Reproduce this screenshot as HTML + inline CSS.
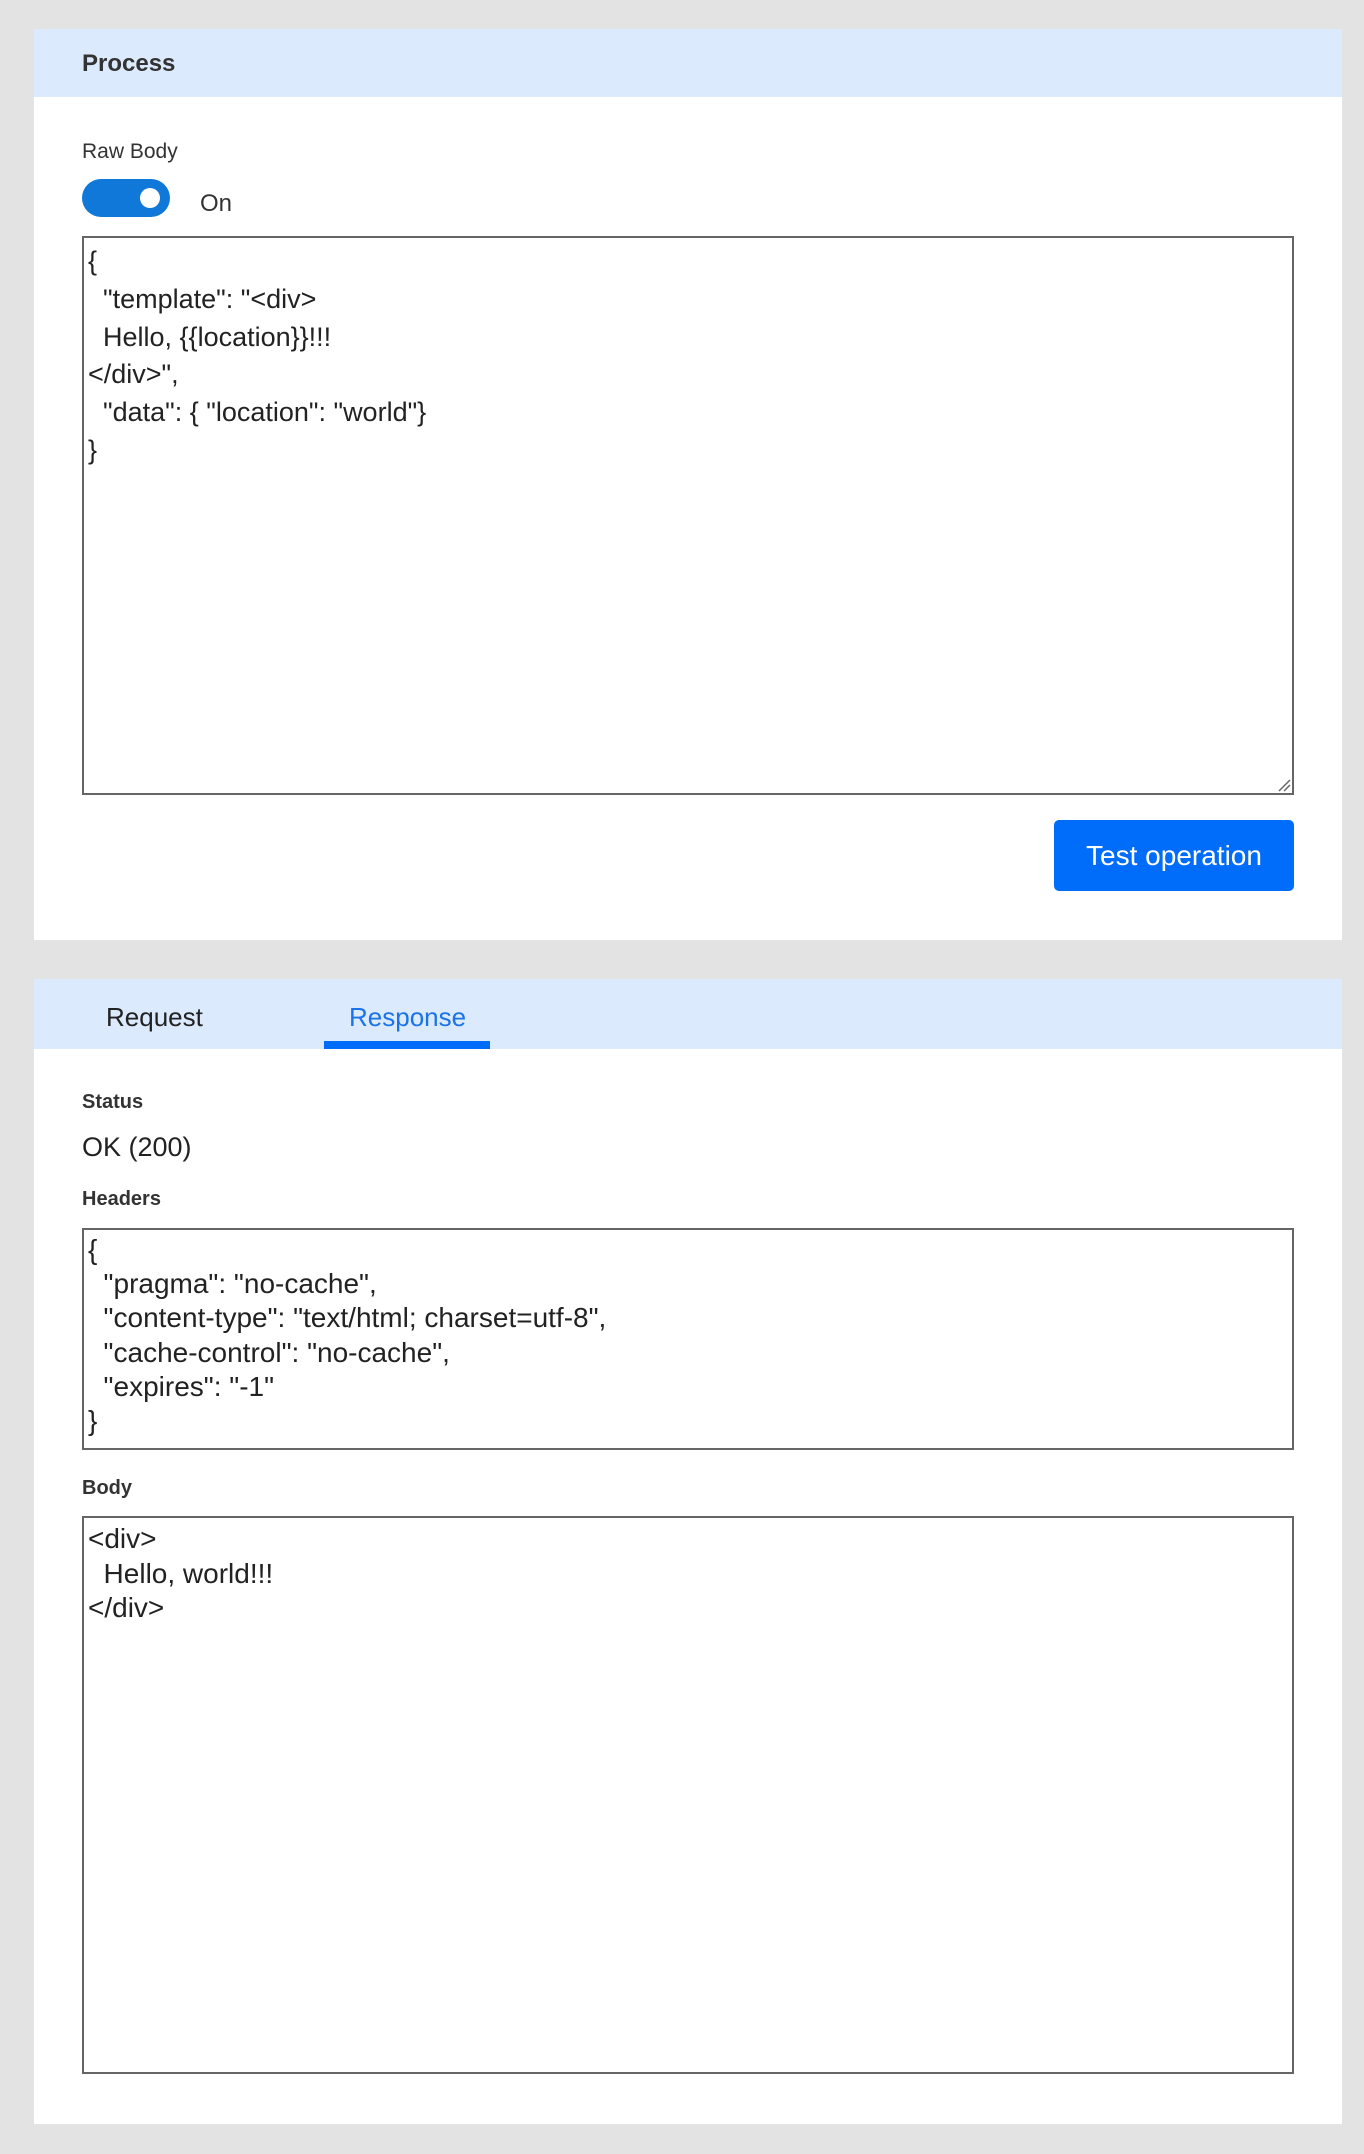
<!DOCTYPE html>
<html><head><meta charset="utf-8"><style>
*{box-sizing:border-box;margin:0;padding:0}
body{width:1364px;height:2154px;background:#e3e3e3;font-family:"Liberation Sans",sans-serif;color:#222;position:relative;overflow:hidden}
.card{position:absolute;left:34px;width:1308px;background:#fff}
.hdr{position:absolute;left:0;right:0;top:0;background:#dbeafc}
.abs{position:absolute;white-space:pre}
.box{position:absolute;left:82px;width:1212px;border:2px solid #666;background:#fff;white-space:pre}
</style></head><body>
<div class="card" style="top:29px;height:911px">
  <div class="hdr" style="height:68px"></div>
  <div class="abs" style="left:48px;top:21px;font-size:24px;font-weight:bold;color:#333">Process</div>
  <div class="abs" style="left:48px;top:111px;font-size:21px;color:#333">Raw Body</div>
  <div class="abs" style="left:48px;top:150px;width:88px;height:38px;border-radius:19px;background:#1078d8"></div>
  <div class="abs" style="left:106px;top:159px;width:20px;height:20px;border-radius:10px;background:#fff"></div>
  <div class="abs" style="left:166px;top:161px;font-size:24px;color:#333">On</div>
</div>
<div class="box" style="top:236px;height:559px;padding:5px 0 0 4px;font-size:27px;line-height:37.8px">{
  "template": "&lt;div&gt;
  Hello, {{location}}!!!
&lt;/div&gt;",
  "data": { "location": "world"}
}</div>
<svg style="position:absolute;left:1276px;top:777px" width="16" height="16"><path d="M3 14L14 3M8 14L14 8" stroke="#666" stroke-width="1.5"/></svg>
<div class="abs" style="left:1054px;top:820px;width:240px;height:71px;background:#006cfa;border-radius:5px;color:#fff;font-size:28px;line-height:71px;text-align:center">Test operation</div>

<div class="card" style="top:979px;height:1145px">
  <div class="hdr" style="height:70px"></div>
  <div class="abs" style="left:72px;top:23px;font-size:26px;color:#222">Request</div>
  <div class="abs" style="left:315px;top:23px;font-size:26px;color:#1a73e8">Response</div>
  <div class="abs" style="left:290px;top:62px;width:166px;height:8px;background:#006cfa"></div>
  <div class="abs" style="left:48px;top:112px;font-size:20px;font-weight:bold;color:#333">Status</div>
  <div class="abs" style="left:48px;top:153px;font-size:27px;color:#222">OK (200)</div>
  <div class="abs" style="left:48px;top:209px;font-size:20px;font-weight:bold;color:#333">Headers</div>
  <div class="abs" style="left:48px;top:498px;font-size:20px;font-weight:bold;color:#333">Body</div>
</div>
<div class="box" style="top:1228px;height:222px;padding:3px 0 0 4px;font-size:28px;line-height:34.2px">{
  "pragma": "no-cache",
  "content-type": "text/html; charset=utf-8",
  "cache-control": "no-cache",
  "expires": "-1"
}</div>
<div class="box" style="top:1516px;height:558px;padding:4px 0 0 4px;font-size:28px;line-height:34.5px">&lt;div&gt;
  Hello, world!!!
&lt;/div&gt;</div>
</body></html>
